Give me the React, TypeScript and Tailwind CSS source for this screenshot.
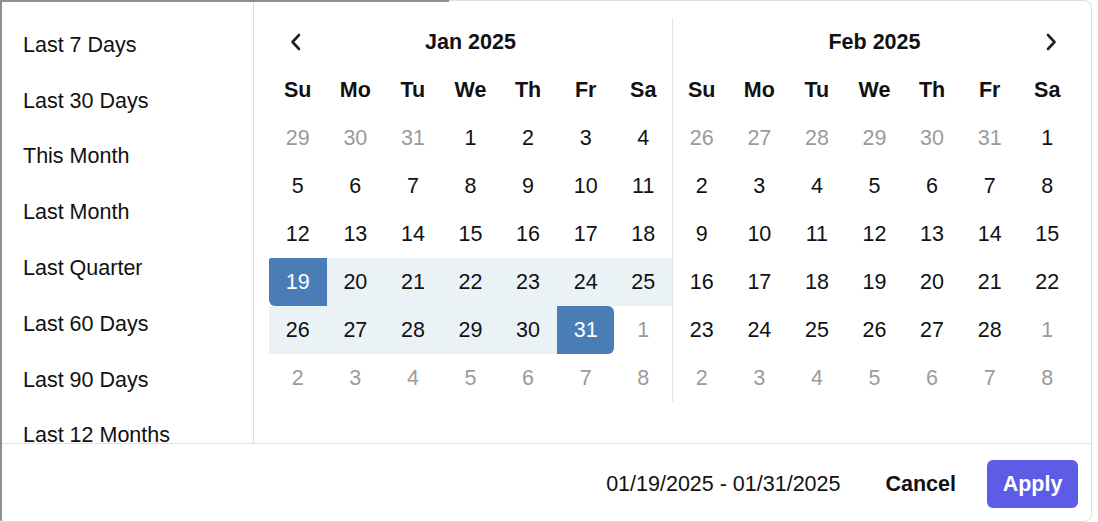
import React from "react";

const presets = [
  "Last 7 Days",
  "Last 30 Days",
  "This Month",
  "Last Month",
  "Last Quarter",
  "Last 60 Days",
  "Last 90 Days",
  "Last 12 Months",
];

const heads = ["Su", "Mo", "Tu", "We", "Th", "Fr", "Sa"];

type Cell = { d: number; out?: boolean; sel?: "start" | "end"; range?: boolean };

const jan: Cell[][] = [
  [{ d: 29, out: true }, { d: 30, out: true }, { d: 31, out: true }, { d: 1 }, { d: 2 }, { d: 3 }, { d: 4 }],
  [5, 6, 7, 8, 9, 10, 11].map((d) => ({ d })),
  [12, 13, 14, 15, 16, 17, 18].map((d) => ({ d })),
  [19, 20, 21, 22, 23, 24, 25].map((d) => ({ d, range: true, sel: d === 19 ? ("start" as const) : undefined })),
  [
    ...[26, 27, 28, 29, 30].map((d) => ({ d, range: true })),
    { d: 31, sel: "end" as const, range: true },
    { d: 1, out: true },
  ],
  [2, 3, 4, 5, 6, 7, 8].map((d) => ({ d, out: true })),
];

const feb: Cell[][] = [
  [...[26, 27, 28, 29, 30, 31].map((d) => ({ d, out: true })), { d: 1 }],
  [2, 3, 4, 5, 6, 7, 8].map((d) => ({ d })),
  [9, 10, 11, 12, 13, 14, 15].map((d) => ({ d })),
  [16, 17, 18, 19, 20, 21, 22].map((d) => ({ d })),
  [...[23, 24, 25, 26, 27, 28].map((d) => ({ d })), { d: 1, out: true }],
  [2, 3, 4, 5, 6, 7, 8].map((d) => ({ d, out: true })),
];

function Chevron({ dir }: { dir: "left" | "right" }) {
  return (
    <svg width="14" height="20" viewBox="0 0 14 20" fill="none">
      <path
        d={dir === "left" ? "M10 3 L3.5 10 L10 17" : "M4 3 L10.5 10 L4 17"}
        stroke="#222"
        strokeWidth="2.6"
        strokeLinecap="round"
        strokeLinejoin="round"
      />
    </svg>
  );
}

function Month({ title, rows, nav }: { title: string; rows: Cell[][]; nav: "left" | "right" }) {
  return (
    <div className="w-[403px] flex flex-col">
      <div className="h-[48px] grid grid-cols-7 items-center">
        <div className="flex justify-center">{nav === "left" ? <div className="-ml-[4px]"><Chevron dir="left" /></div> : null}</div>
        <div className="col-span-5 text-center font-bold">{title}</div>
        <div className="flex justify-center">{nav === "right" ? <div className="ml-[8px]"><Chevron dir="right" /></div> : null}</div>
      </div>
      <div className="h-[48px] grid grid-cols-7 items-center">
        {heads.map((h) => (
          <div key={h} className="text-center font-bold">
            {h}
          </div>
        ))}
      </div>
      {rows.map((r, i) => (
        <div key={i} className="h-[48px] grid grid-cols-7">
          {r.map((c, j) => {
            let cls = "flex items-center justify-center ";
            if (c.sel === "start") cls += "bg-[#4a7db6] text-white rounded-tl-[2px] rounded-bl-[6px]";
            else if (c.sel === "end") cls += "bg-[#4a7db6] text-white rounded-r-[6px]";
            else if (c.range) cls += "bg-[#ebf2f6] text-[#111]";
            else if (c.out) cls += "text-[#9b9b9b]";
            else cls += "text-[#111]";
            return (
              <div key={j} className={cls}>
                {c.d}
              </div>
            );
          })}
        </div>
      ))}
    </div>
  );
}

export default function App() {
  return (
    <div className="w-[1098px] h-[522px] bg-white font-['Liberation_Sans',Arial,sans-serif] text-[21.5px] text-[#111]">
      <div className="relative w-[1092px] h-[522px] border border-[#dedede] border-l-2 border-l-[#8e8e8e] rounded-r-[8px] rounded-bl-[3px] flex flex-col">
        <div className="absolute -top-[1px] -left-[2px] w-[449px] h-[2px] bg-[#8e8e8e]" />
        <div className="flex h-[442px] shrink-0">
          <div className="w-[252px] shrink-0 border-r border-[#dcdce2] pt-[16px] pl-[21px] flex flex-col">
            {presets.map((p, i) => (
              <div
                key={p}
                className={i === presets.length - 1 ? "h-[35px] shrink-0 pt-[19px] leading-[16px]" : "h-[55.8px] shrink-0 flex items-center"}
              >
                {p}
              </div>
            ))}
          </div>
          <div className="flex pl-[15px] pt-[17px]">
            <Month title="Jan 2025" rows={jan} nav="left" />
            <div className="w-px h-[384px] bg-[#e2e2e6]" />
            <Month title="Feb 2025" rows={feb} nav="right" />
          </div>
        </div>
        <div className="flex-1 border-t border-[#e0e0e0] flex items-center justify-end pr-[13px] pt-[2px]">
          <div className="mr-[45px] mt-[2px]">01/19/2025 - 01/31/2025</div>
          <div className="font-bold mr-[31px] mt-[2px]">Cancel</div>
          <div className="w-[91px] h-[48px] rounded-[6px] bg-[#5c5ce6] text-white font-bold flex items-center justify-center pt-[2px]">
            Apply
          </div>
        </div>
      </div>
    </div>
  );
}
